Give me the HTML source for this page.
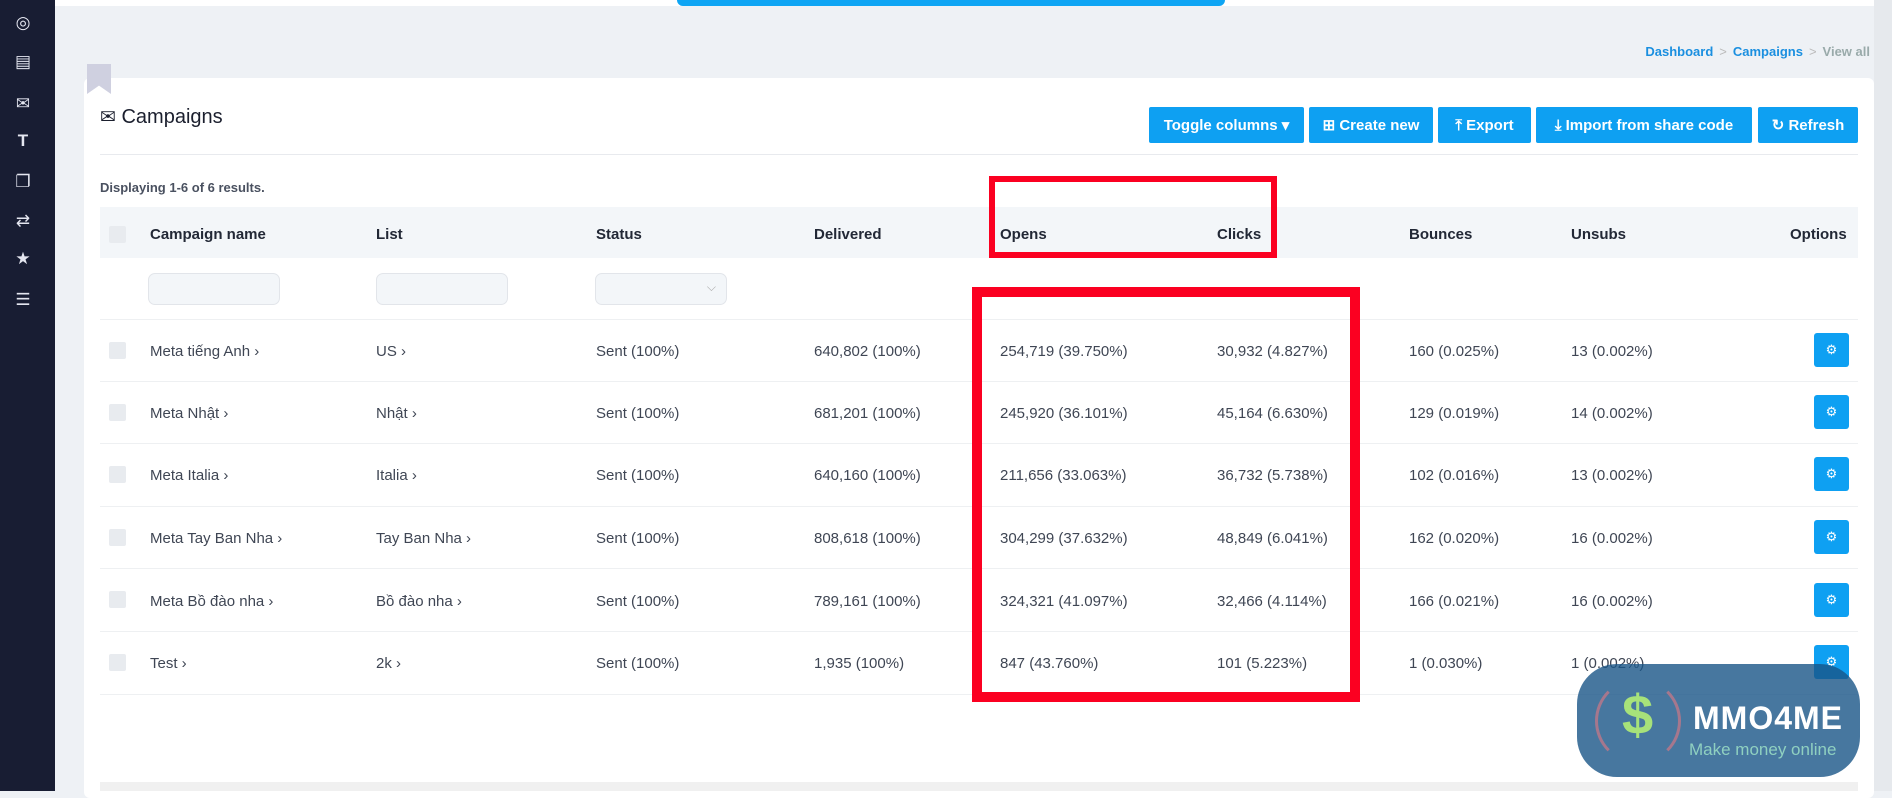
<!DOCTYPE html>
<html><head><meta charset="utf-8"><style>
*{box-sizing:border-box;margin:0;padding:0}
body{width:1892px;height:791px;overflow:hidden;background:#eef1f5;font-family:"Liberation Sans",sans-serif;color:#3b4350;position:relative}
.sb{position:absolute;left:0;top:0;width:55px;height:791px;background:#181d33}
.sb div{position:absolute;left:13px;width:20px;height:18px;color:#e4e6f0;font-size:17px;text-align:center;line-height:18px}
.topbar{position:absolute;left:55px;top:0;right:0;height:6px;background:#fff}
.blue{position:absolute;left:677px;top:0;width:548px;height:6px;background:#0ea5f4;border-radius:0 0 8px 8px}
.bc{position:absolute;right:22px;top:44px;font-size:13px;font-weight:bold;color:#1a8fe0}
.bc span{color:#bbb;font-weight:normal;margin:0 6px}
.bc i{color:#9aa;font-style:normal}
.card{position:absolute;left:84px;top:78px;width:1790px;height:720px;background:#fff;border-radius:6px}
.bm{position:absolute;left:87px;top:64px;width:24px;height:30px;background:#cfd0e0;clip-path:polygon(0 0,100% 0,100% 100%,50% 72%,0 100%)}
.title{position:absolute;left:100px;top:106px;font-size:20px;color:#1b1f2e}
.btn{position:absolute;top:107px;height:36px;background:#0ea0f2;color:#fff;font-weight:bold;font-size:15px;line-height:38px;text-align:center;border-radius:2px}
.sep{position:absolute;left:100px;top:154px;width:1758px;height:1px;background:#e8eaee}
.disp{position:absolute;left:100px;top:180px;font-size:13px;font-weight:bold;color:#4a5160}
.thead{position:absolute;left:100px;top:207px;width:1758px;height:51px;background:#f3f6f9}
.h{position:absolute;top:226px;font-size:15px;font-weight:bold;color:#222836}
.cb{position:absolute;left:109px;width:17px;height:17px;background:#e8ebef;border-radius:2px}
.inp{position:absolute;top:273px;height:32px;width:132px;background:#f3f6f9;border:1px solid #e2e5ea;border-radius:7px}
.line{position:absolute;left:100px;width:1758px;height:1px;background:#eef0f2}
.c{position:absolute;font-size:15px;color:#3f4654;margin-top:2px}
.ob{position:absolute;left:1814px;width:35px;height:34px;background:#0ea0f2;border-radius:3px;color:#fff;font-size:13px;text-align:center;line-height:34px}
.red{position:absolute;border:6px solid #fb0021}
.wm{position:absolute;left:1577px;top:664px;width:283px;height:113px;background:rgba(25,85,135,.8);border-radius:40px}
.scroll{position:absolute;left:100px;top:782px;width:1758px;height:9px;background:#f0f0f0}
.rs{position:absolute;left:1874px;top:0;width:18px;height:791px;background:#e6e9ed}
</style></head><body>
<div class="sb">
<div style="top:14px">◎</div><div style="top:53px">▤</div><div style="top:95px">✉</div><div style="top:132px;font-weight:bold">T</div><div style="top:173px">❐</div><div style="top:212px">⇄</div><div style="top:250px">★</div><div style="top:291px">☰</div>
</div>
<div class="topbar"></div><div class="blue"></div>
<div class="rs"></div>
<div class="bc">Dashboard<span>&gt;</span>Campaigns<span>&gt;</span><i>View all</i></div>
<div class="card"></div>
<div class="bm"></div>
<div class="title"><span style="font-size:19px">✉</span> Campaigns</div>
<div class="btn" style="left:1149px;width:155px">Toggle columns ▾</div>
<div class="btn" style="left:1309px;width:124px">⊞ Create new</div>
<div class="btn" style="left:1438px;width:93px">⤒ Export</div>
<div class="btn" style="left:1536px;width:216px">⤓ Import from share code</div>
<div class="btn" style="left:1758px;width:100px">↻ Refresh</div>
<div class="sep"></div>
<div class="disp">Displaying 1-6 of 6 results.</div>
<div class="thead"></div>
<div class="cb" style="top:226px"></div>
<div class="h" style="left:150px">Campaign name</div>
<div class="h" style="left:376px">List</div>
<div class="h" style="left:596px">Status</div>
<div class="h" style="left:814px">Delivered</div>
<div class="h" style="left:1000px">Opens</div>
<div class="h" style="left:1217px">Clicks</div>
<div class="h" style="left:1409px">Bounces</div>
<div class="h" style="left:1571px">Unsubs</div>
<div class="h" style="left:1790px">Options</div>
<div class="inp" style="left:148px"></div>
<div class="inp" style="left:376px"></div>
<div class="inp" style="left:595px"><span style="position:absolute;right:10px;top:6px;color:#aaa;font-size:12px">⌵</span></div>
<div class="line" style="top:319px"></div>

<div class="cb" style="top:342px"></div><div class="c" style="left:150px;top:341px">Meta tiếng Anh ›</div><div class="c" style="left:376px;top:341px">US ›</div><div class="c" style="left:596px;top:341px">Sent (100%)</div><div class="c" style="left:814px;top:341px">640,802 (100%)</div><div class="c" style="left:1000px;top:341px">254,719 (39.750%)</div><div class="c" style="left:1217px;top:341px">30,932 (4.827%)</div><div class="c" style="left:1409px;top:341px">160 (0.025%)</div><div class="c" style="left:1571px;top:341px">13 (0.002%)</div><div class="ob" style="top:333px">⚙</div>
<div class="line" style="top:381px"></div>
<div class="cb" style="top:404px"></div><div class="c" style="left:150px;top:403px">Meta Nhật ›</div><div class="c" style="left:376px;top:403px">Nhật ›</div><div class="c" style="left:596px;top:403px">Sent (100%)</div><div class="c" style="left:814px;top:403px">681,201 (100%)</div><div class="c" style="left:1000px;top:403px">245,920 (36.101%)</div><div class="c" style="left:1217px;top:403px">45,164 (6.630%)</div><div class="c" style="left:1409px;top:403px">129 (0.019%)</div><div class="c" style="left:1571px;top:403px">14 (0.002%)</div><div class="ob" style="top:395px">⚙</div>
<div class="line" style="top:443px"></div>
<div class="cb" style="top:466px"></div><div class="c" style="left:150px;top:465px">Meta Italia ›</div><div class="c" style="left:376px;top:465px">Italia ›</div><div class="c" style="left:596px;top:465px">Sent (100%)</div><div class="c" style="left:814px;top:465px">640,160 (100%)</div><div class="c" style="left:1000px;top:465px">211,656 (33.063%)</div><div class="c" style="left:1217px;top:465px">36,732 (5.738%)</div><div class="c" style="left:1409px;top:465px">102 (0.016%)</div><div class="c" style="left:1571px;top:465px">13 (0.002%)</div><div class="ob" style="top:457px">⚙</div>
<div class="line" style="top:506px"></div>
<div class="cb" style="top:529px"></div><div class="c" style="left:150px;top:528px">Meta Tay Ban Nha ›</div><div class="c" style="left:376px;top:528px">Tay Ban Nha ›</div><div class="c" style="left:596px;top:528px">Sent (100%)</div><div class="c" style="left:814px;top:528px">808,618 (100%)</div><div class="c" style="left:1000px;top:528px">304,299 (37.632%)</div><div class="c" style="left:1217px;top:528px">48,849 (6.041%)</div><div class="c" style="left:1409px;top:528px">162 (0.020%)</div><div class="c" style="left:1571px;top:528px">16 (0.002%)</div><div class="ob" style="top:520px">⚙</div>
<div class="line" style="top:568px"></div>
<div class="cb" style="top:591px"></div><div class="c" style="left:150px;top:591px">Meta Bồ đào nha ›</div><div class="c" style="left:376px;top:591px">Bồ đào nha ›</div><div class="c" style="left:596px;top:591px">Sent (100%)</div><div class="c" style="left:814px;top:591px">789,161 (100%)</div><div class="c" style="left:1000px;top:591px">324,321 (41.097%)</div><div class="c" style="left:1217px;top:591px">32,466 (4.114%)</div><div class="c" style="left:1409px;top:591px">166 (0.021%)</div><div class="c" style="left:1571px;top:591px">16 (0.002%)</div><div class="ob" style="top:583px">⚙</div>
<div class="line" style="top:631px"></div>
<div class="cb" style="top:654px"></div><div class="c" style="left:150px;top:653px">Test ›</div><div class="c" style="left:376px;top:653px">2k ›</div><div class="c" style="left:596px;top:653px">Sent (100%)</div><div class="c" style="left:814px;top:653px">1,935 (100%)</div><div class="c" style="left:1000px;top:653px">847 (43.760%)</div><div class="c" style="left:1217px;top:653px">101 (5.223%)</div><div class="c" style="left:1409px;top:653px">1 (0.030%)</div><div class="c" style="left:1571px;top:653px">1 (0.002%)</div><div class="ob" style="top:645px">⚙</div>
<div class="line" style="top:694px"></div>
<div class="scroll"></div>

<div class="red" style="left:989px;top:176px;width:288px;height:82px"></div>
<div class="red" style="left:972px;top:287px;width:388px;height:415px;border-width:10px"></div>

<div class="wm">
<div style="position:absolute;left:18px;top:14px;width:86px;height:86px;border-radius:50%;border:3px solid rgba(230,120,130,.6);border-top-color:transparent;border-bottom-color:transparent"></div>
<div style="position:absolute;left:45px;top:18px;font-size:56px;font-weight:bold;color:#a7e27a">$</div>
<div style="position:absolute;left:116px;top:36px;font-size:32px;font-weight:bold;color:#fff;letter-spacing:1px">MMO4ME</div>
<div style="position:absolute;left:112px;top:76px;font-size:17px;color:#8fd0c0">Make money online</div>
</div>
</body></html>
